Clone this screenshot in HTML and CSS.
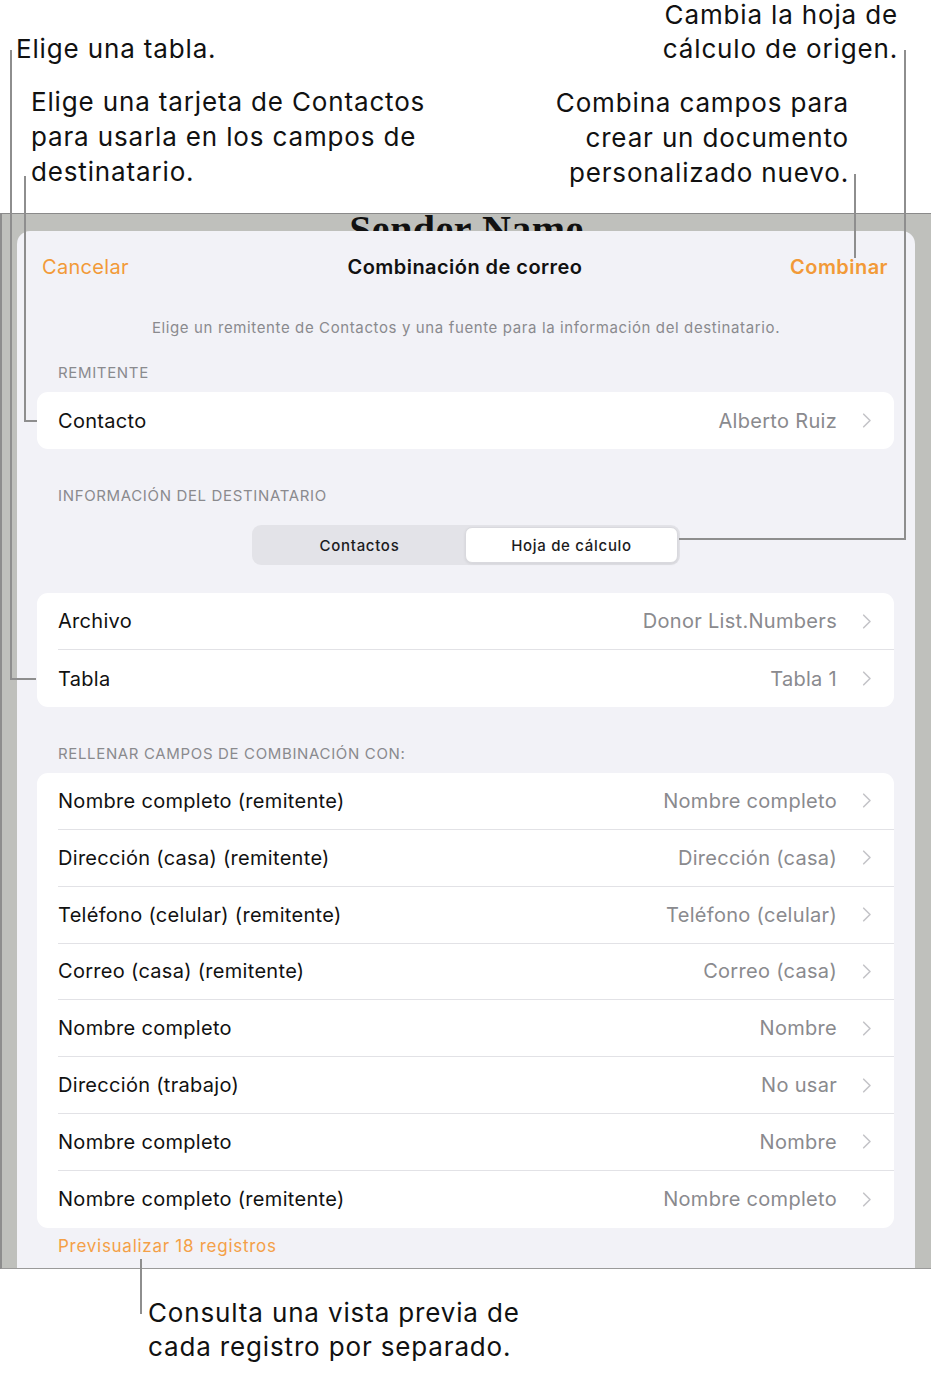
FILE: index.html
```html
<!DOCTYPE html>
<html lang="es">
<head>
<meta charset="utf-8">
<title>Combinación de correo</title>
<link rel="stylesheet" href="styles.css">
</head>
<body>
<div class="page">
  <div class="callouts">
    <div class="col-left">
      <p class="note n-tabla">Elige una tabla.</p>
      <p class="note n-tarjeta">Elige una tarjeta de Contactos<br>para usarla en los campos de<br>destinatario.</p>
    </div>
    <div class="col-right">
      <p class="note n-hoja">Cambia la hoja de<br>cálculo de origen.</p>
      <p class="note n-combina">Combina campos para<br>crear un documento<br>personalizado nuevo.</p>
    </div>
  </div>

  <div class="frame">
    <div class="doc-title">Sender Name</div>
    <div class="sheet">
      <div class="header">
        <span class="btn cancel">Cancelar</span>
        <span class="title">Combinación de correo</span>
        <span class="btn merge">Combinar</span>
      </div>
      <p class="subtitle">Elige un remitente de Contactos y una fuente para la información del destinatario.</p>

      <p class="section">REMITENTE</p>
      <div class="card">
        <div class="row"><div class="row-body"><span class="label">Contacto</span><span class="value">Alberto Ruiz</span><svg class="chev" viewBox="0 0 9 15"><path d="M1.2 1.2 L7.5 7.5 L1.2 13.8"/></svg></div></div>
      </div>

      <p class="section s-gap">INFORMACIÓN DEL DESTINATARIO</p>
      <div class="segmented">
        <span class="seg">Contactos</span>
        <span class="seg seg-on">Hoja de cálculo</span>
      </div>

      <div class="card c-file">
        <div class="row"><div class="row-body"><span class="label">Archivo</span><span class="value">Donor List.Numbers</span><svg class="chev" viewBox="0 0 9 15"><path d="M1.2 1.2 L7.5 7.5 L1.2 13.8"/></svg></div></div>
        <div class="row"><div class="row-body"><span class="label">Tabla</span><span class="value">Tabla 1</span><svg class="chev" viewBox="0 0 9 15"><path d="M1.2 1.2 L7.5 7.5 L1.2 13.8"/></svg></div></div>
      </div>

      <p class="section s-gap">RELLENAR CAMPOS DE COMBINACIÓN CON:</p>
      <div class="card c-list">
        <div class="row"><div class="row-body"><span class="label">Nombre completo (remitente)</span><span class="value">Nombre completo</span><svg class="chev" viewBox="0 0 9 15"><path d="M1.2 1.2 L7.5 7.5 L1.2 13.8"/></svg></div></div>
        <div class="row"><div class="row-body"><span class="label">Dirección (casa) (remitente)</span><span class="value">Dirección (casa)</span><svg class="chev" viewBox="0 0 9 15"><path d="M1.2 1.2 L7.5 7.5 L1.2 13.8"/></svg></div></div>
        <div class="row"><div class="row-body"><span class="label">Teléfono (celular) (remitente)</span><span class="value">Teléfono (celular)</span><svg class="chev" viewBox="0 0 9 15"><path d="M1.2 1.2 L7.5 7.5 L1.2 13.8"/></svg></div></div>
        <div class="row"><div class="row-body"><span class="label">Correo (casa) (remitente)</span><span class="value">Correo (casa)</span><svg class="chev" viewBox="0 0 9 15"><path d="M1.2 1.2 L7.5 7.5 L1.2 13.8"/></svg></div></div>
        <div class="row"><div class="row-body"><span class="label">Nombre completo</span><span class="value">Nombre</span><svg class="chev" viewBox="0 0 9 15"><path d="M1.2 1.2 L7.5 7.5 L1.2 13.8"/></svg></div></div>
        <div class="row"><div class="row-body"><span class="label">Dirección (trabajo)</span><span class="value">No usar</span><svg class="chev" viewBox="0 0 9 15"><path d="M1.2 1.2 L7.5 7.5 L1.2 13.8"/></svg></div></div>
        <div class="row"><div class="row-body"><span class="label">Nombre completo</span><span class="value">Nombre</span><svg class="chev" viewBox="0 0 9 15"><path d="M1.2 1.2 L7.5 7.5 L1.2 13.8"/></svg></div></div>
        <div class="row"><div class="row-body"><span class="label">Nombre completo (remitente)</span><span class="value">Nombre completo</span><svg class="chev" viewBox="0 0 9 15"><path d="M1.2 1.2 L7.5 7.5 L1.2 13.8"/></svg></div></div>
      </div>

      <p class="preview">Previsualizar 18 registros</p>
    </div>
  </div>

  <p class="note n-consulta">Consulta una vista previa de<br>cada registro por separado.</p>

  <div class="leader l-tabla"></div>
  <div class="leader l-tarjeta"></div>
  <div class="leader l-combina"></div>
  <div class="leader l-hoja"></div>
  <div class="leader l-consulta"></div>
</div>
</body>
</html>
```

FILE: styles.css
```css
* { box-sizing: border-box; }

html, body {
  margin: 0;
  padding: 0;
  background: #ffffff;
}

body {
  font-family: Inter, "Noto Sans", "Liberation Sans", sans-serif;
  color: #1c1c1e;
  width: 931px;
  height: 1373px;
  overflow: hidden;
}

.page {
  position: relative;
  width: 931px;
  height: 1373px;
}

/* ---------- callout texts ---------- */
.callouts {
  height: 213px;
  display: flex;
  justify-content: space-between;
}

.note {
  margin: 0;
  font-size: 26px;
  line-height: 35px;
  color: #111111;
  letter-spacing: 0.85px;
}

.n-tabla { margin: 31px 0 0 16px; }
.n-tarjeta { margin: 18px 0 0 31px; }

.col-right { text-align: right; }
.n-hoja { margin: -2px 33px 0 0; line-height: 34px; }
.n-combina { margin: 19px 82px 0 0; }

.n-consulta {
  margin: 27px 0 0 148px;
  line-height: 34px;
}

/* ---------- leader lines ---------- */
.leader {
  position: absolute;
  border-color: #8e8e8e;
  border-style: solid;
  border-width: 0;
}
.l-tabla { left: 10px; top: 50px; width: 26px; height: 630px; border-left-width: 2px; border-bottom-width: 2px; }
.l-tarjeta { left: 24px; top: 176px; width: 13px; height: 246px; border-left-width: 2px; border-bottom-width: 2px; }
.l-combina { left: 854px; top: 174px; width: 2px; height: 84px; border-left-width: 2px; }
.l-hoja { left: 679px; top: 50px; width: 227px; height: 490px; border-right-width: 2px; border-bottom-width: 2px; }
.l-consulta { left: 140px; top: 1259px; width: 2px; height: 55px; border-left-width: 2px; }

/* ---------- frame & sheet ---------- */
.frame {
  position: relative;
  height: 1056px;
  background: #bfc0bc;
  border-top: 1px solid #8a8a8a;
  border-left: 2px solid #8d8d8d;
  border-bottom: 1px solid #9a9a9a;
  padding: 17px 16px 0 15px;
}

.doc-title {
  position: absolute;
  left: 0;
  right: 0;
  top: -4px;
  text-align: center;
  font-family: "Liberation Serif", "DejaVu Serif", serif;
  font-weight: bold;
  font-size: 40px;
  line-height: 40px;
  color: #111111;
  letter-spacing: 0.5px;
}

.sheet {
  position: relative;
  height: 1037px;
  background: #f2f2f7;
  border-radius: 13px 13px 0 0;
  overflow: hidden;
}

.header {
  height: 72px;
  display: grid;
  grid-template-columns: 1fr auto 1fr;
  align-items: center;
  padding: 0 27px 0 25px;
}

.btn {
  font-size: 20px;
  color: #f29a38;
  letter-spacing: 0.3px;
}
.cancel { justify-self: start; }
.merge { justify-self: end; font-weight: 600; letter-spacing: 0.45px; }

.title {
  font-size: 20px;
  font-weight: 600;
  color: #111111;
  letter-spacing: 0.45px;
}

.subtitle {
  margin: 0;
  height: 50px;
  line-height: 50px;
  text-align: center;
  font-size: 15px;
  color: #8a8a8e;
  letter-spacing: 0.62px;
}

.section {
  margin: 0;
  padding: 10px 0 9px 41px;
  line-height: 20px;
  font-size: 15px;
  color: #8a8a8e;
  letter-spacing: 0.65px;
}
.s-gap { margin-top: 27px; }

.card {
  margin: 0 21px 0 20px;
  background: #ffffff;
  border-radius: 11px;
  overflow: hidden;
}
.c-file { margin-top: 28px; }

.row {
  padding-left: 21px;
}
.row-body {
  height: 57px;
  display: flex;
  align-items: center;
  padding-right: 22px;
  border-bottom: 1px solid #e2e2e6;
}
.c-list .row-body { height: 56.85px; }
.row:last-child .row-body { border-bottom: none; }

.label {
  flex: 1;
  font-size: 20px;
  color: #111111;
  letter-spacing: 0.3px;
}
.value {
  font-size: 20px;
  color: #8a8a8e;
  letter-spacing: 0.3px;
}
.chev {
  width: 10px;
  height: 15px;
  margin-left: 25px;
  fill: none;
  stroke: #c4c4c8;
  stroke-width: 1.6;
  stroke-linecap: round;
  stroke-linejoin: round;
}

/* ---------- segmented control ---------- */
.segmented {
  width: 428px;
  height: 40px;
  margin: 10px auto 0;
  padding: 2px;
  display: flex;
  background: #e3e3e8;
  border-radius: 9px;
}
.seg {
  flex: 1;
  display: flex;
  align-items: center;
  justify-content: center;
  font-size: 15px;
  font-weight: 500;
  color: #1c1c1e;
  border-radius: 7px;
  letter-spacing: 0.7px;
}
.seg-on {
  background: #ffffff;
  border: 1px solid #d9d9de;
  box-shadow: 0 1px 3px rgba(0, 0, 0, 0.08);
}

.preview {
  margin: 8px 0 0 41px;
  line-height: 20px;
  font-size: 17px;
  color: #f4a047;
  letter-spacing: 0.73px;
}
```
